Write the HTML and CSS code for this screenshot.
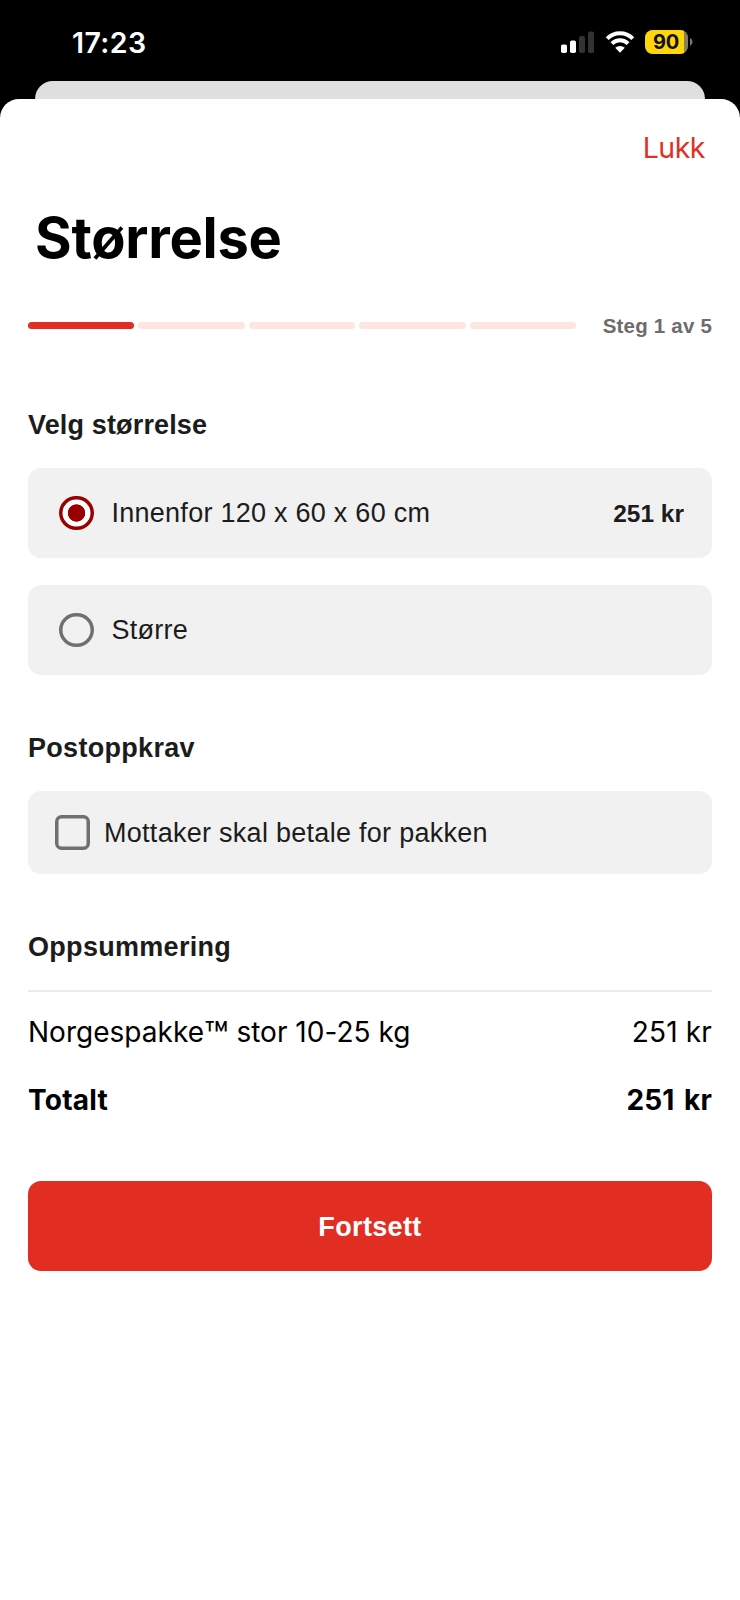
FILE: index.html
```html
<!DOCTYPE html>
<html lang="nb">
<head>
<meta charset="utf-8">
<title>Størrelse</title>
<link rel="stylesheet" href="styles.css">
</head>
<body>
<header class="status">
  <time class="clock">17:23</time>
  <div class="indicators">
    <svg class="signal" width="35" height="24" viewBox="0 0 35 24">
      <rect x="1" y="14.5" width="6" height="8.5" rx="1.8" fill="#fff"/>
      <rect x="10" y="10.5" width="6" height="12.5" rx="1.8" fill="#fff"/>
      <rect x="19" y="6" width="6" height="17" rx="1.8" fill="#333"/>
      <rect x="28" y="1.5" width="6" height="21.5" rx="1.8" fill="#333"/>
    </svg>
    <svg class="wifi" width="30" height="24" viewBox="0 0 30 24">
      <g fill="none" stroke="#fff" stroke-width="4">
        <path d="M2.2 8.6A18.1 18.1 0 0 1 27.8 8.6"/>
        <path d="M6.9 13.7A11.5 11.5 0 0 1 23.1 13.7"/>
      </g>
      <path d="M15 22.8L10.2 17.8A7.2 7.2 0 0 1 19.8 17.8Z" fill="#fff"/>
    </svg>
    <div class="battery"><span class="level">90</span></div>
    <svg class="cap" width="3" height="8" viewBox="0 0 3 8"><path d="M0 0Q2.6 1.5 2.6 4T0 8Z" fill="#777"/></svg>
  </div>
</header>
<div class="behind"></div>
<main class="sheet">
  <div class="toolbar"><a class="close">Lukk</a></div>
  <h1 class="title">Størrelse</h1>
  <div class="progress">
    <div class="steps">
      <i class="step done"></i><i class="step"></i><i class="step"></i><i class="step"></i><i class="step"></i>
    </div>
    <span class="step-label">Steg 1 av 5</span>
  </div>
  <h2 class="heading first">Velg størrelse</h2>
  <div class="options">
    <label class="card option"><i class="radio checked"></i><span class="option-text">Innenfor 120 x 60 x 60 cm</span><b class="price">251 kr</b></label>
    <label class="card option"><i class="radio"></i><span class="option-text">Større</span></label>
  </div>
  <h2 class="heading">Postoppkrav</h2>
  <label class="card check"><i class="box"></i><span class="check-text">Mottaker skal betale for pakken</span></label>
  <h2 class="heading">Oppsummering</h2>
  <div class="line item"><span class="item-name">Norgespakke<span class="tm">™</span> stor 10-25 kg</span><span class="item-price">251 kr</span></div>
  <div class="line total"><span class="total-name">Totalt</span><span class="total-price">251 kr</span></div>
  <button class="submit">Fortsett</button>
</main>
</body>
</html>
```
FILE: styles.css
```css
* { box-sizing: border-box; }
body {
  margin: 0;
  width: 740px;
  height: 1600px;
  overflow: hidden;
  display: flex;
  flex-direction: column;
  background: #000;
  color: #1c1c1c;
  font-family: "Liberation Sans", Arial, sans-serif;
  white-space: nowrap;
}
i { display: block; }

/* Status bar */
.status {
  height: 81px;
  padding: 3px 47px 0 72px;
  display: flex;
  justify-content: space-between;
  align-items: center;
  font-family: Inter, sans-serif;
}
.clock { color: #fff; font-size: 28.5px; font-weight: 600; letter-spacing: 0.4px; }
.indicators { display: flex; align-items: center; }
.wifi { margin-left: 10px; }
.battery {
  width: 43px;
  height: 24px;
  margin-left: 10px;
  border-radius: 7.5px;
  background: linear-gradient(90deg, #ffd60a 39px, #85805e 39px);
  display: flex;
  align-items: center;
}
.level { width: 42px; text-align: center; color: #111; font-size: 20px; font-weight: 700; letter-spacing: -0.3px; }
.cap { margin-left: 2px; }

/* Sheet stack */
.behind { height: 18px; margin: 0 35px; border-radius: 18px 18px 0 0; background: #dfdfdf; }
.sheet {
  flex: 1;
  padding: 0 28px;
  border-radius: 19px 19px 0 0;
  background: #fff;
}
.toolbar {
  height: 96px;
  padding-right: 7px;
  display: flex;
  justify-content: flex-end;
  align-items: center;
}
.close { color: #dc3228; font: 400 28.5px Inter, sans-serif; letter-spacing: -0.5px; }
.title {
  margin: 0;
  height: 84px;
  padding: 1px 0 0 7px;
  color: #000;
  font: 700 56px/84px Inter, sans-serif;
  letter-spacing: -0.25px;
}

/* Progress */
.progress { height: 93px; display: flex; justify-content: space-between; align-items: center; }
.steps { width: 548px; display: flex; gap: 4px; }
.step { flex: 1; height: 7px; border-radius: 4px; background: #fde6df; }
.done { background: #e22d23; }
.step-label { color: #6c6c6c; font-size: 20.5px; font-weight: 700; letter-spacing: 0.2px; }

/* Form */
.heading {
  margin: 0;
  height: 116px;
  padding-top: 31px;
  display: flex;
  align-items: center;
  font-size: 27px;
  font-weight: 700;
  letter-spacing: 0.3px;
}
.first { height: 96px; padding-top: 11px; letter-spacing: 0.15px; }
.options { display: grid; gap: 27px; }
.card {
  display: flex;
  align-items: center;
  border-radius: 13px;
  background: #f1f1f1;
  font-size: 27px;
  letter-spacing: 0.28px;
}
.option { height: 90px; padding: 0 28px 0 31px; gap: 18px; }
.option-text { letter-spacing: 0.26px; }
.radio {
  width: 34.5px;
  height: 34.5px;
  border-radius: 50%;
  box-shadow: inset 0 0 0 3.5px #707070;
}
.checked {
  background: radial-gradient(circle, #900 8.3px, #fff 9px);
  box-shadow: inset 0 0 0 3.5px #900;
}
.price { margin-left: auto; padding-top: 2px; font-size: 24.5px; letter-spacing: 0; }
.check { height: 83px; padding: 0 0 0 27px; gap: 14px; }
.check-text { padding-top: 2px; }
.box { width: 35px; height: 35px; border-radius: 6.5px; box-shadow: inset 0 0 0 3.5px #707070; }

/* Summary */
.line {
  display: flex;
  justify-content: space-between;
  align-items: center;
  color: #000;
  font: 400 28px Inter, sans-serif;
}
.item { height: 82px; border-top: 2px solid #ebebeb; }
.item-name { letter-spacing: 0.02px; }
.tm { font-size: 40px; line-height: 0; vertical-align: -8px; }
.item-price { letter-spacing: 0.15px; }
.total { height: 55px; font-weight: 700; }
.total-name { letter-spacing: 0.25px; }
.total-price { letter-spacing: 0.2px; word-spacing: 2.5px; }
.submit {
  display: block;
  width: 100%;
  height: 90px;
  margin: 54px 0 0;
  padding: 2px 0 0;
  border: 0;
  border-radius: 13px;
  background: #e22d23;
  color: #fff;
  font: 700 27px "Liberation Sans", Arial, sans-serif;
  letter-spacing: 0.35px;
}
```
